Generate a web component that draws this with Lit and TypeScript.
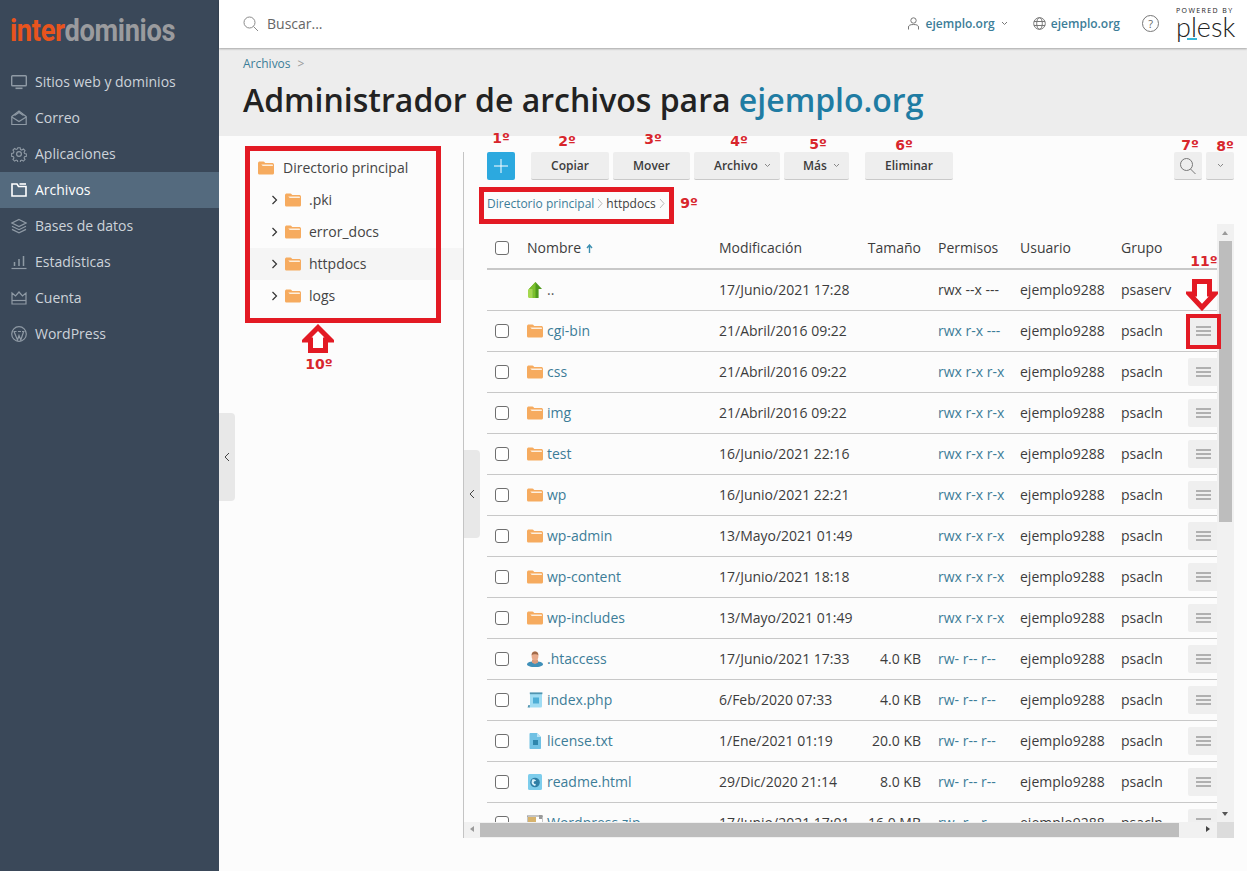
import { LitElement, css, html, svg, type TemplateResult } from 'lit';
import { customElement } from 'lit/decorators.js';

type Row = {
  icon: string;
  name: string;
  date: string;
  size: string;
  perms: string;
  user: string;
  group: string;
};

const folder = (w = 16, h = 14): TemplateResult => html`<svg width=${w} height=${h} viewBox="0 0 16 14">
  <path d="M0 2.2C0 1 .8.4 1.8.4h3.4c.8 0 1.2.4 1.6 1l.5.7h6.9c1 0 1.8.7 1.8 1.7v8.2c0 1-.8 1.6-1.8 1.6H1.8C.8 13.6 0 13 0 12z" fill="#f6ab5f" />
  <path d="M6.6 3.4h7.6c.5 0 .7.3.7.7v.9H5.6c-.6 0-1-.2-1.4-.6l-.9-1z" fill="#fdf0e0" />
</svg>`;

const fileIcons: Record<string, () => TemplateResult> = {
  folder: () => folder(),
  up: () => html`<svg width="16" height="16" viewBox="0 0 16 16">
    <path d="M8.5 0 15 7h-3.4v9H5.5V7H2z" fill="#4f9a1d" />
    <path d="M5.5 7h-4L1 8v6.5c0 .8.6 1.5 1.5 1.5h3z" fill="#a5d84f" />
    <path d="M8.5 0 2 7h3.5v9H8.5z" fill="#7cc02d" />
  </svg>`,
  user: () => html`<svg width="16" height="16" viewBox="0 0 16 16">
    <ellipse cx="8" cy="13.2" rx="8" ry="3" fill="#3f8fb8" />
    <path d="M5 8.5h6v3.2L8 13l-3-1.3z" fill="#d79a7d" />
    <ellipse cx="8" cy="5" rx="3.4" ry="4.4" fill="#e8ab8c" />
    <path d="M4.6 4.4C4.6 1.4 6 .4 8 .4s3.4 1 3.4 4C10 3 6 3 4.6 4.4z" fill="#a06a4a" />
  </svg>`,
  php: () => html`<svg width="16" height="16" viewBox="0 0 16 16">
    <path d="M3 1h12v13c0 1-.6 1.6-1.4 1.6H1.2C2.4 15.4 3 14.800 3 14z" fill="#9fdcf3" />
    <rect x="2.800" y=".4" width="12.600" height="1.800" fill="#4f94b0" />
    <rect x="6" y="5.500" width="6" height="6" fill="#4eaed6" />
    <path d="M.6 15.600 1.400 13h1.400v2.600z" fill="#4f94b0" />
  </svg>`,
  txt: () => html`<svg width="16" height="16" viewBox="0 0 16 16">
    <path d="M2.500 1c0-.5.4-1 1-1h6.500l4 4v11c0 .6-.4 1-1 1H3.500c-.6 0-1-.4-1-1z" fill="#70c1e4" />
    <path d="M10 0v4h4z" fill="#b9e3f5" />
    <rect x="6" y="7" width="5" height="5" fill="#2f86ad" />
  </svg>`,
  html: () => html`<svg width="16" height="16" viewBox="0 0 16 16">
    <rect x="1" y="0" width="14" height="16" rx="1.500" fill="#7dcdec" />
    <circle cx="8" cy="8.500" r="4.800" fill="#2f7fa6" />
    <path d="M5.500 5.200c1.600-.2 3.300.4 3.600 1.700L7.500 8l1.500 1.500-.8 2.500C6.400 11.600 4.600 10.400 4.600 8.500c0-1.200.3-2.300.9-3.300z" fill="#d8f1fb" />
    <circle cx="8.200" cy="8.500" r="1.500" fill="#2f7fa6" />
  </svg>`,
  zip: () => html`<svg width="16" height="16" viewBox="0 0 16 16">
    <rect x="0" y="1" width="16" height="15" fill="#ffffff" stroke="#8a8a8a" />
    <rect x="1" y="2" width="8" height="14" fill="#d7b36d" />
    <rect x="12" y="0" width="3" height="4" fill="#9a9a9a" />
  </svg>`,
};

const rows: Row[] = [
  { icon: 'up', name: '..', date: '17/Junio/2021 17:28', size: '', perms: 'rwx --x ---', user: 'ejemplo9288', group: 'psaserv' },
  { icon: 'folder', name: 'cgi-bin', date: '21/Abril/2016 09:22', size: '', perms: 'rwx r-x ---', user: 'ejemplo9288', group: 'psacln' },
  { icon: 'folder', name: 'css', date: '21/Abril/2016 09:22', size: '', perms: 'rwx r-x r-x', user: 'ejemplo9288', group: 'psacln' },
  { icon: 'folder', name: 'img', date: '21/Abril/2016 09:22', size: '', perms: 'rwx r-x r-x', user: 'ejemplo9288', group: 'psacln' },
  { icon: 'folder', name: 'test', date: '16/Junio/2021 22:16', size: '', perms: 'rwx r-x r-x', user: 'ejemplo9288', group: 'psacln' },
  { icon: 'folder', name: 'wp', date: '16/Junio/2021 22:21', size: '', perms: 'rwx r-x r-x', user: 'ejemplo9288', group: 'psacln' },
  { icon: 'folder', name: 'wp-admin', date: '13/Mayo/2021 01:49', size: '', perms: 'rwx r-x r-x', user: 'ejemplo9288', group: 'psacln' },
  { icon: 'folder', name: 'wp-content', date: '17/Junio/2021 18:18', size: '', perms: 'rwx r-x r-x', user: 'ejemplo9288', group: 'psacln' },
  { icon: 'folder', name: 'wp-includes', date: '13/Mayo/2021 01:49', size: '', perms: 'rwx r-x r-x', user: 'ejemplo9288', group: 'psacln' },
  { icon: 'user', name: '.htaccess', date: '17/Junio/2021 17:33', size: '4.0 KB', perms: 'rw- r-- r--', user: 'ejemplo9288', group: 'psacln' },
  { icon: 'php', name: 'index.php', date: '6/Feb/2020 07:33', size: '4.0 KB', perms: 'rw- r-- r--', user: 'ejemplo9288', group: 'psacln' },
  { icon: 'txt', name: 'license.txt', date: '1/Ene/2021 01:19', size: '20.0 KB', perms: 'rw- r-- r--', user: 'ejemplo9288', group: 'psacln' },
  { icon: 'html', name: 'readme.html', date: '29/Dic/2020 21:14', size: '8.0 KB', perms: 'rw- r-- r--', user: 'ejemplo9288', group: 'psacln' },
  { icon: 'zip', name: 'Wordpress.zip', date: '17/Junio/2021 17:01', size: '16.0 MB', perms: 'rw- r-- r--', user: 'ejemplo9288', group: 'psacln' },
];

const navIcons: Record<string, TemplateResult> = {
  monitor: svg`<rect x=".7" y="1.700" width="14.600" height="10" rx=".8" stroke-width="1.400" /><path d="M4.500 14.300h7" stroke-width="1.600" />`,
  mail: svg`<path d="M.8 6.500 8 1l7.200 5.500v8H.8z" /><path d="M.8 7 8 11.500 15.200 7M3.500 5.500 8 2.500l4.500 3" />`,
  gear: svg`<path d="M6.700 1h2.600l.4 2 1.400.6 1.800-1.100 1.800 1.800-1.100 1.800.6 1.400 2 .4v2.600l-2 .4-.6 1.400 1.100 1.800-1.800 1.800-1.800-1.100-1.400.6-.4 2H6.700l-.4-2-1.400-.6-1.800 1.100-1.800-1.800 1.100-1.800-.6-1.400-2-.4V7.300l2-.4.6-1.400-1.100-1.800 1.800-1.800 1.800 1.100 1.400-.6z" transform="translate(.8 .8) scale(.9)" /><circle cx="8" cy="8" r="2.400" />`,
  files: svg`<path d="M1 2h5l1.500 2.500h7.500V14H1z" stroke-width="1.600" /><path d="M8.500 2h6.500" stroke-width="1.600" />`,
  layers: svg`<path d="M8 1.500 15 5l-7 3.500L1 5z" /><path d="M1 8.200l7 3.500 7-3.500M1 11.400l7 3.500 7-3.500" />`,
  stats: svg`<path d="M.5 14.500h15" /><path d="M3.500 12V8M8 12V5M12.500 12V2" stroke-width="1.500" />`,
  crown: svg`<path d="M1 3l3.500 3L8 2l3.500 4L15 3v11H1z" /><path d="M1 10.500h14" />`,
  wp: svg`<circle cx="8" cy="8" r="7.300" /><path d="M3 5.500 6.500 14 8 9.500 9.800 14l2.700-8M2.500 5.500h3M7 5.500h3M11 5.500h2.500" />`,
};

const nav = [
  ['monitor', 'Sitios web y dominios'],
  ['mail', 'Correo'],
  ['gear', 'Aplicaciones'],
  ['files', 'Archivos'],
  ['layers', 'Bases de datos'],
  ['stats', 'Estadísticas'],
  ['crown', 'Cuenta'],
  ['wp', 'WordPress'],
];

const toolbarMarks = [
  { label: '1º', x: 501, y: 138 },
  { label: '2º', x: 567, y: 141 },
  { label: '3º', x: 653, y: 139 },
  { label: '4º', x: 739, y: 141 },
  { label: '5º', x: 818, y: 144 },
  { label: '6º', x: 904, y: 145 },
  { label: '7º', x: 1190, y: 145 },
  { label: '8º', x: 1225, y: 146 },
  { label: '9º', x: 689, y: 203 },
  { label: '10º', x: 319, y: 364 },
  { label: '11º', x: 1204, y: 261 },
];

const chevronDown = html`<svg class="caret" width="7" height="5" viewBox="0 0 7 5"><path d="M1 1l2.500 2.500L6 1" /></svg>`;

@customElement('app-root')
export class AppRoot extends LitElement {
  private renderRow(r: Row): TemplateResult {
    const isUp = r.icon === 'up';
    return html`<div class="row">
      <div class="cell-check">${isUp ? '' : html`<span class="check"></span>`}</div>
      <div class="cell-name"><span class="ficon">${fileIcons[r.icon]()}</span>${isUp ? html`<span class="plain">..</span>` : html`<span class="link">${r.name}</span>`}</div>
      <div>${r.date}</div>
      <div class="size">${r.size}</div>
      <div></div>
      <div class=${isUp ? '' : 'link'}>${r.perms}</div>
      <div>${r.user}</div>
      <div>${r.group}</div>
      <div class="cell-menu">${isUp ? '' : html`<span class="menu"><i></i><i></i><i></i></span>`}</div>
    </div>`;
  }

  render(): TemplateResult {
    return html`<aside class="side">
        <div class="logo"><span class="logo-text"><span class="inter">inter</span><span class="dom">dominios</span></span></div>
        <nav>
          ${nav.map(
            ([icon, label]) => html`<div class="nav-item ${label === 'Archivos' ? 'active' : ''}">
              <svg width="16" height="16" viewBox="0 0 16 16">${navIcons[icon]}</svg>
              <span>${label}</span>
            </div>`,
          )}
        </nav>
      </aside>
      <div class="main">
        <header class="top">
          <svg class="search" width="16" height="16" viewBox="0 0 16 16"><circle cx="6.500" cy="6.500" r="5.500" /><path d="M10.500 10.500 15 15" /></svg>
          <span class="search-text">Buscar...</span>
          <span class="top-right">
            <span class="top-link first">
              <svg width="11" height="13" viewBox="0 0 11 13"><circle cx="5.500" cy="3.500" r="2.700" /><path d="M.5 12.500V10c0-1.500 1.500-2.500 5-2.500s5 1 5 2.500v2.500" /></svg>
              ejemplo.org ${chevronDown}
            </span>
            <span class="top-link second">
              <svg width="13" height="13" viewBox="0 0 13 13"><circle cx="6.500" cy="6.500" r="5.800" /><ellipse cx="6.500" cy="6.500" rx="2.800" ry="5.800" /><path d="M1 4.500h11M1 8.500h11" /></svg>
              ejemplo.org
            </span>
            <span class="help">?</span>
            <span class="plesk">
              <span class="powered">POWERED BY</span>
              <span class="wordmark">plesk</span>
              <span class="plesk-bar"></span>
            </span>
          </span>
        </header>
        <section class="head">
          <div class="crumb-top"><span class="link">Archivos</span><span class="sep">&gt;</span></div>
          <h1>Administrador de archivos para <span class="title-link">ejemplo.org</span></h1>
        </section>
        <div class="body">
          <div class="tree">
            <div class="tree-row root">${folder()}<span>Directorio principal</span></div>
            ${['.pki', 'error_docs', 'httpdocs', 'logs'].map(
              (name) => html`<div class="tree-row child ${name === 'httpdocs' ? 'current' : ''}">
                <svg class="arrow" width="7" height="10" viewBox="0 0 7 10"><path d="M1.500 1l4 4-4 4" /></svg>
                ${folder()}<span>${name}</span>
              </div>`,
            )}
          </div>
          <div class="files">
            <div class="toolbar">
              <button class="add"><svg width="14" height="14" viewBox="0 0 14 14"><path d="M7 0v14M0 7h14" /></svg></button>
              <button class="btn copy">Copiar</button>
              <button class="btn move">Mover</button>
              <button class="btn file">Archivo ${chevronDown}</button>
              <button class="btn more">Más ${chevronDown}</button>
              <button class="btn del">Eliminar</button>
              <span class="grow"></span>
              <button class="btn square"><svg class="glass" width="18" height="18" viewBox="0 0 18 18"><circle cx="7.500" cy="7.500" r="6" /><path d="M11.500 12l5 5" /></svg></button>
              <button class="btn square">${chevronDown}</button>
            </div>
            <div class="path">
              <span class="link">Directorio principal</span>
              <svg class="path-sep" width="6" height="11" viewBox="0 0 6 11"><path d="M1 1l4 4.500-4 4.500" /></svg>
              <span>httpdocs</span>
              <svg class="path-sep" width="6" height="11" viewBox="0 0 6 11"><path d="M1 1l4 4.500-4 4.500" /></svg>
            </div>
            <div class="scroller">
              <div class="viewport">
                <div class="row header">
                  <div class="cell-check"><span class="check"></span></div>
                  <div class="sort-cell">Nombre <svg class="sort" width="7" height="9" viewBox="0 0 7 9"><path d="M3.500 9V1.500M1 4l2.500-3L6 4" /></svg></div>
                  <div>Modificación</div>
                  <div class="size">Tamaño</div>
                  <div></div>
                  <div>Permisos</div>
                  <div>Usuario</div>
                  <div>Grupo</div>
                  <div></div>
                </div>
                ${rows.map((r) => this.renderRow(r))}
              </div>
              <div class="vbar">
                <span class="tri up"></span>
                <span class="vthumb"></span>
                <span class="tri down"></span>
              </div>
              <div class="hbar">
                <span class="tri left"></span>
                <span class="hthumb"></span>
                <span class="tri right"></span>
              </div>
              <div class="corner"></div>
            </div>
          </div>
        </div>
      </div>
      <div class="toggle outer"><svg width="6" height="10" viewBox="0 0 6 10"><path d="M5 1 1 5l4 4" /></svg></div>
      <div class="toggle inner"><svg width="6" height="10" viewBox="0 0 6 10"><path d="M5 1 1 5l4 4" /></svg></div>
      <div class="box box-tree"></div>
      <div class="box box-path"></div>
      <div class="box box-menu"></div>
      <svg class="mark-arrow arrow-down" width="32" height="32" viewBox="0 0 32 32"><path d="M8.500 2.500h15V15h5L16 28.500 3.500 15h5z" /></svg>
      <svg class="mark-arrow arrow-up" width="32" height="29" viewBox="0 0 32 29"><path d="M16 3.500 28.500 16h-5v10.500h-15V16h-5z" /></svg>
      ${toolbarMarks.map((m) => html`<span class="mark" style="left:${m.x}px;top:${m.y}px">${m.label}</span>`)}`;
  }

  static styles = css`
    :host {
      display: flex;
      position: relative;
      width: 1247px;
      height: 871px;
      overflow: hidden;
      background: #fcfcfc;
      color: #3c3c3c;
      font-family: 'Open Sans', 'Liberation Sans', sans-serif;
      font-size: 14px;
    }

    .link {
      color: #3c7d98;
    }

    .side {
      width: 219px;
      flex: none;
      background: #3a4859;
    }

    .logo {
      height: 64px;
      padding: 13px 0 0 10px;
      box-sizing: border-box;
      font-family: 'Roboto', 'Liberation Sans', sans-serif;
      font-weight: 700;
      font-size: 31px;
      line-height: 36px;
      letter-spacing: -0.4px;
      white-space: nowrap;
    }

    .logo-text {
      display: inline-block;
      transform: scaleX(0.88);
      transform-origin: left center;
    }

    .inter {
      color: #e8541d;
    }

    .dom {
      color: #9a9b9e;
    }

    .nav-item {
      display: flex;
      align-items: center;
      gap: 8px;
      height: 36px;
      padding-left: 11px;
      color: #cdd3d9;
    }

    .nav-item span {
      margin-bottom: 2px;
    }

    .nav-item svg {
      fill: none;
      stroke: #8f9aa5;
      stroke-width: 1.2;
    }

    .nav-item.active {
      background: #546a7e;
      color: #ffffff;
    }

    .nav-item.active svg {
      stroke: #ffffff;
    }

    .main {
      flex: 1;
      min-width: 0;
      display: flex;
      flex-direction: column;
    }

    .top {
      height: 48px;
      flex: none;
      display: flex;
      align-items: center;
      padding-left: 24px;
      background: #ffffff;
      box-shadow: 0 1px 2px rgba(0, 0, 0, 0.3);
      position: relative;
    }

    .search {
      fill: none;
      stroke: #8a8a8a;
      stroke-width: 1;
    }

    .search-text {
      margin: 0 0 2px 8px;
      color: #666666;
    }

    .top-right {
      margin-left: auto;
      display: flex;
      align-items: center;
      font-size: 12px;
      font-weight: 600;
      color: #3c7d98;
    }

    .top-link {
      display: flex;
      align-items: center;
      gap: 7px;
      padding-bottom: 2px;
    }

    .top-link svg {
      fill: none;
      stroke: #777777;
      stroke-width: 1;
    }

    .top-link.second {
      margin-left: 25px;
      gap: 5px;
    }

    .top-link .caret {
      margin-left: -1px;
    }

    .caret {
      fill: none;
      stroke: #888888;
      stroke-width: 1;
    }

    .help {
      width: 15px;
      height: 15px;
      border: 1px solid #777777;
      border-radius: 50%;
      margin: 0 0 1px 22px;
      text-align: center;
      font-size: 11px;
      font-weight: 400;
      line-height: 15px;
      color: #666666;
    }

    .plesk {
      width: 60px;
      height: 34px;
      margin: 0 11px 4px 17px;
      padding-top: 2px;
      box-sizing: border-box;
      display: flex;
      flex-direction: column;
      position: relative;
      color: #222222;
    }

    .powered {
      font-size: 7px;
      font-weight: 400;
      letter-spacing: 1.4px;
      line-height: 8px;
      white-space: nowrap;
    }

    .wordmark {
      font-size: 27px;
      font-weight: 300;
      line-height: 20px;
      margin-top: 2px;
      font-family: 'Lato', 'Open Sans', sans-serif;
    }

    .plesk-bar {
      position: absolute;
      left: 11px;
      top: 33px;
      width: 10px;
      height: 2px;
      background: #37b6d8;
    }

    .head {
      height: 88px;
      flex: none;
      box-sizing: border-box;
      padding: 8px 24px 0;
      background: #ededed;
    }

    .crumb-top {
      font-size: 12px;
      line-height: 16px;
      display: flex;
      gap: 7px;
    }

    .sep {
      color: #999999;
    }

    h1 {
      margin: 6px 0 0;
      font-size: 32px;
      line-height: 44px;
      font-weight: 600;
      color: #222222;
      white-space: nowrap;
    }

    .title-link {
      color: #1f7ca3;
    }

    .body {
      flex: 1;
      min-height: 0;
      display: flex;
    }

    .tree {
      width: 244px;
      flex: none;
      box-sizing: border-box;
      padding: 16px 0 0 26px;
      color: #444444;
    }

    .tree-row {
      height: 32px;
      display: flex;
      align-items: center;
      gap: 9px;
      white-space: nowrap;
    }

    .tree-row span {
      margin-bottom: 2px;
    }

    .tree-row.root {
      padding-left: 13px;
    }

    .tree-row.child {
      padding-left: 26px;
      gap: 7px;
    }

    .tree-row.child span {
      margin-left: 1px;
    }

    .tree-row.current {
      background: #f5f5f5;
    }

    .arrow {
      fill: none;
      stroke: #333333;
      stroke-width: 1.200;
    }

    .files {
      flex: 1;
      min-width: 0;
      display: flex;
      flex-direction: column;
      padding-right: 13px;
      border-left: 1px solid #c4c4c4;
      margin: 16px 0 33px;
    }

    .toolbar {
      display: flex;
      height: 28px;
      padding-left: 23px;
    }

    button {
      font: inherit;
      border: none;
      padding: 0;
      margin: 0;
    }

    .add {
      width: 28px;
      height: 28px;
      border-radius: 2px;
      background: #2ca9df;
      display: flex;
      align-items: center;
      justify-content: center;
      margin-right: 16px;
    }

    .add svg {
      fill: none;
      stroke: #ffffff;
      stroke-width: 1;
    }

    .btn {
      height: 28px;
      background: #eeeeee;
      border-bottom: 1px solid #c9c9c9;
      border-radius: 2px;
      font-size: 12px;
      font-weight: 600;
      color: #3c3c3c;
      display: flex;
      align-items: center;
      justify-content: center;
      gap: 6px;
      margin-right: 4px;
    }

    .copy {
      width: 78px;
    }

    .move {
      width: 77px;
    }

    .file {
      width: 86px;
      justify-content: flex-start;
      padding-left: 20px;
    }

    .more {
      width: 65px;
      margin-right: 16px;
      justify-content: flex-start;
      padding-left: 19px;
    }

    .del {
      width: 88px;
    }

    .grow {
      flex: 1;
    }

    .square {
      width: 28px;
    }

    .square:last-child {
      margin-right: 0;
    }

    .glass {
      fill: none;
      stroke: #777777;
      stroke-width: 1;
    }

    .path {
      height: 44px;
      padding: 2px 0 0 23px;
      display: flex;
      align-items: center;
      gap: 3px;
      font-size: 12px;
      font-weight: 400;
      box-sizing: border-box;
      white-space: nowrap;
    }

    .path-sep {
      fill: none;
      stroke: #b8b8b8;
      stroke-width: 1;
    }

    .scroller {
      flex: 1;
      min-height: 0;
      display: grid;
      grid-template-columns: 1fr 17px;
      grid-template-rows: 1fr 16px;
    }

    .viewport {
      overflow: hidden;
      padding-left: 23px;
      min-width: 0;
      min-height: 0;
    }

    .row {
      display: grid;
      grid-template-columns: 40px 192px 134px 68px 17px 82px 101px 67px 30px;
      align-items: center;
      width: 731px;
      height: 41px;
      box-sizing: border-box;
      border-bottom: 1px solid #c8c8c8;
      white-space: nowrap;
    }

    .row > div {
      padding-bottom: 2px;
    }

    .row > .cell-check,
    .row > .cell-menu {
      padding-bottom: 0;
    }

    .header {
      height: 46px;
      padding-top: 3px;
      border-bottom: 2px solid #c8c8c8;
    }

    .header > div {
      padding-bottom: 0;
    }

    .cell-check {
      padding-left: 8px;
      display: flex;
      align-items: center;
    }

    .check {
      display: block;
      width: 12px;
      height: 12px;
      border: 1px solid #6f6f6f;
      border-radius: 3px;
      background: #ffffff;
    }

    .cell-name {
      display: flex;
      align-items: center;
      gap: 4px;
    }

    .ficon {
      display: flex;
      width: 16px;
      justify-content: center;
      margin-top: 2px;
    }

    .plain {
      color: #555555;
    }

    .size {
      text-align: right;
    }

    .sort {
      fill: none;
      stroke: #3c8fb0;
      stroke-width: 1.400;
      margin-left: 1px;
    }

    .menu {
      width: 30px;
      height: 28px;
      background: #efefef;
      border-radius: 2px 0 0 2px;
      display: flex;
      flex-direction: column;
      align-items: center;
      justify-content: center;
      gap: 2px;
    }

    .menu i {
      display: block;
      width: 15px;
      height: 2px;
      background: #b0b0b0;
    }

    .vbar {
      background: #f1f1f1;
      position: relative;
    }

    .vthumb {
      position: absolute;
      left: 2px;
      top: 17px;
      width: 13px;
      height: 281px;
      background: #bdbdbd;
    }

    .hbar {
      background: #f1f1f1;
      position: relative;
    }

    .hthumb {
      position: absolute;
      left: 16px;
      top: 1px;
      width: 699px;
      height: 14px;
      background: #bdbdbd;
    }

    .corner {
      background: #dcdcdc;
    }

    .tri {
      position: absolute;
      width: 0;
      height: 0;
      border-style: solid;
      border-color: transparent;
    }

    .tri.up {
      top: 7px;
      left: 5px;
      border-width: 0 3.500px 4px;
      border-bottom-color: #9a9a9a;
    }

    .tri.down {
      bottom: 6px;
      left: 5px;
      border-width: 4px 3.500px 0;
      border-top-color: #555555;
    }

    .tri.left {
      top: 4px;
      left: 6px;
      border-width: 3.500px 4px 3.500px 0;
      border-right-color: #9a9a9a;
    }

    .tri.right {
      top: 4px;
      right: 7px;
      border-width: 3.500px 0 3.500px 4px;
      border-left-color: #444444;
    }

    .toggle {
      position: absolute;
      width: 16px;
      height: 88px;
      background: #e8e8e8;
      border-radius: 0 4px 4px 0;
      display: flex;
      align-items: center;
      justify-content: center;
    }

    .toggle svg {
      fill: none;
      stroke: #444444;
      stroke-width: 1;
    }

    .toggle.outer {
      left: 219px;
      top: 413px;
    }

    .toggle.inner {
      left: 464px;
      top: 450px;
    }

    .box {
      position: absolute;
      box-sizing: border-box;
      border: 5px solid #e31a24;
    }

    .box-tree {
      left: 245px;
      top: 146px;
      width: 196px;
      height: 177px;
    }

    .box-path {
      left: 479px;
      top: 187px;
      width: 195px;
      height: 37px;
    }

    .box-menu {
      left: 1186px;
      top: 314px;
      width: 35px;
      height: 35px;
      border-width: 4px;
    }

    .mark {
      position: absolute;
      transform: translate(-50%, -50%);
      color: #d8262c;
      font-family: 'DejaVu Sans', 'Open Sans', sans-serif;
      font-size: 14px;
      font-weight: 700;
      line-height: 18px;
      white-space: nowrap;
    }

    .mark-arrow {
      position: absolute;
      fill: #ffffff;
      stroke: #e31a24;
      stroke-width: 5;
    }

    .arrow-down {
      left: 1186px;
      top: 279px;
    }

    .arrow-up {
      left: 302px;
      top: 324px;
    }
  `;
}

declare global {
  interface HTMLElementTagNameMap {
    'app-root': AppRoot;
  }
}
